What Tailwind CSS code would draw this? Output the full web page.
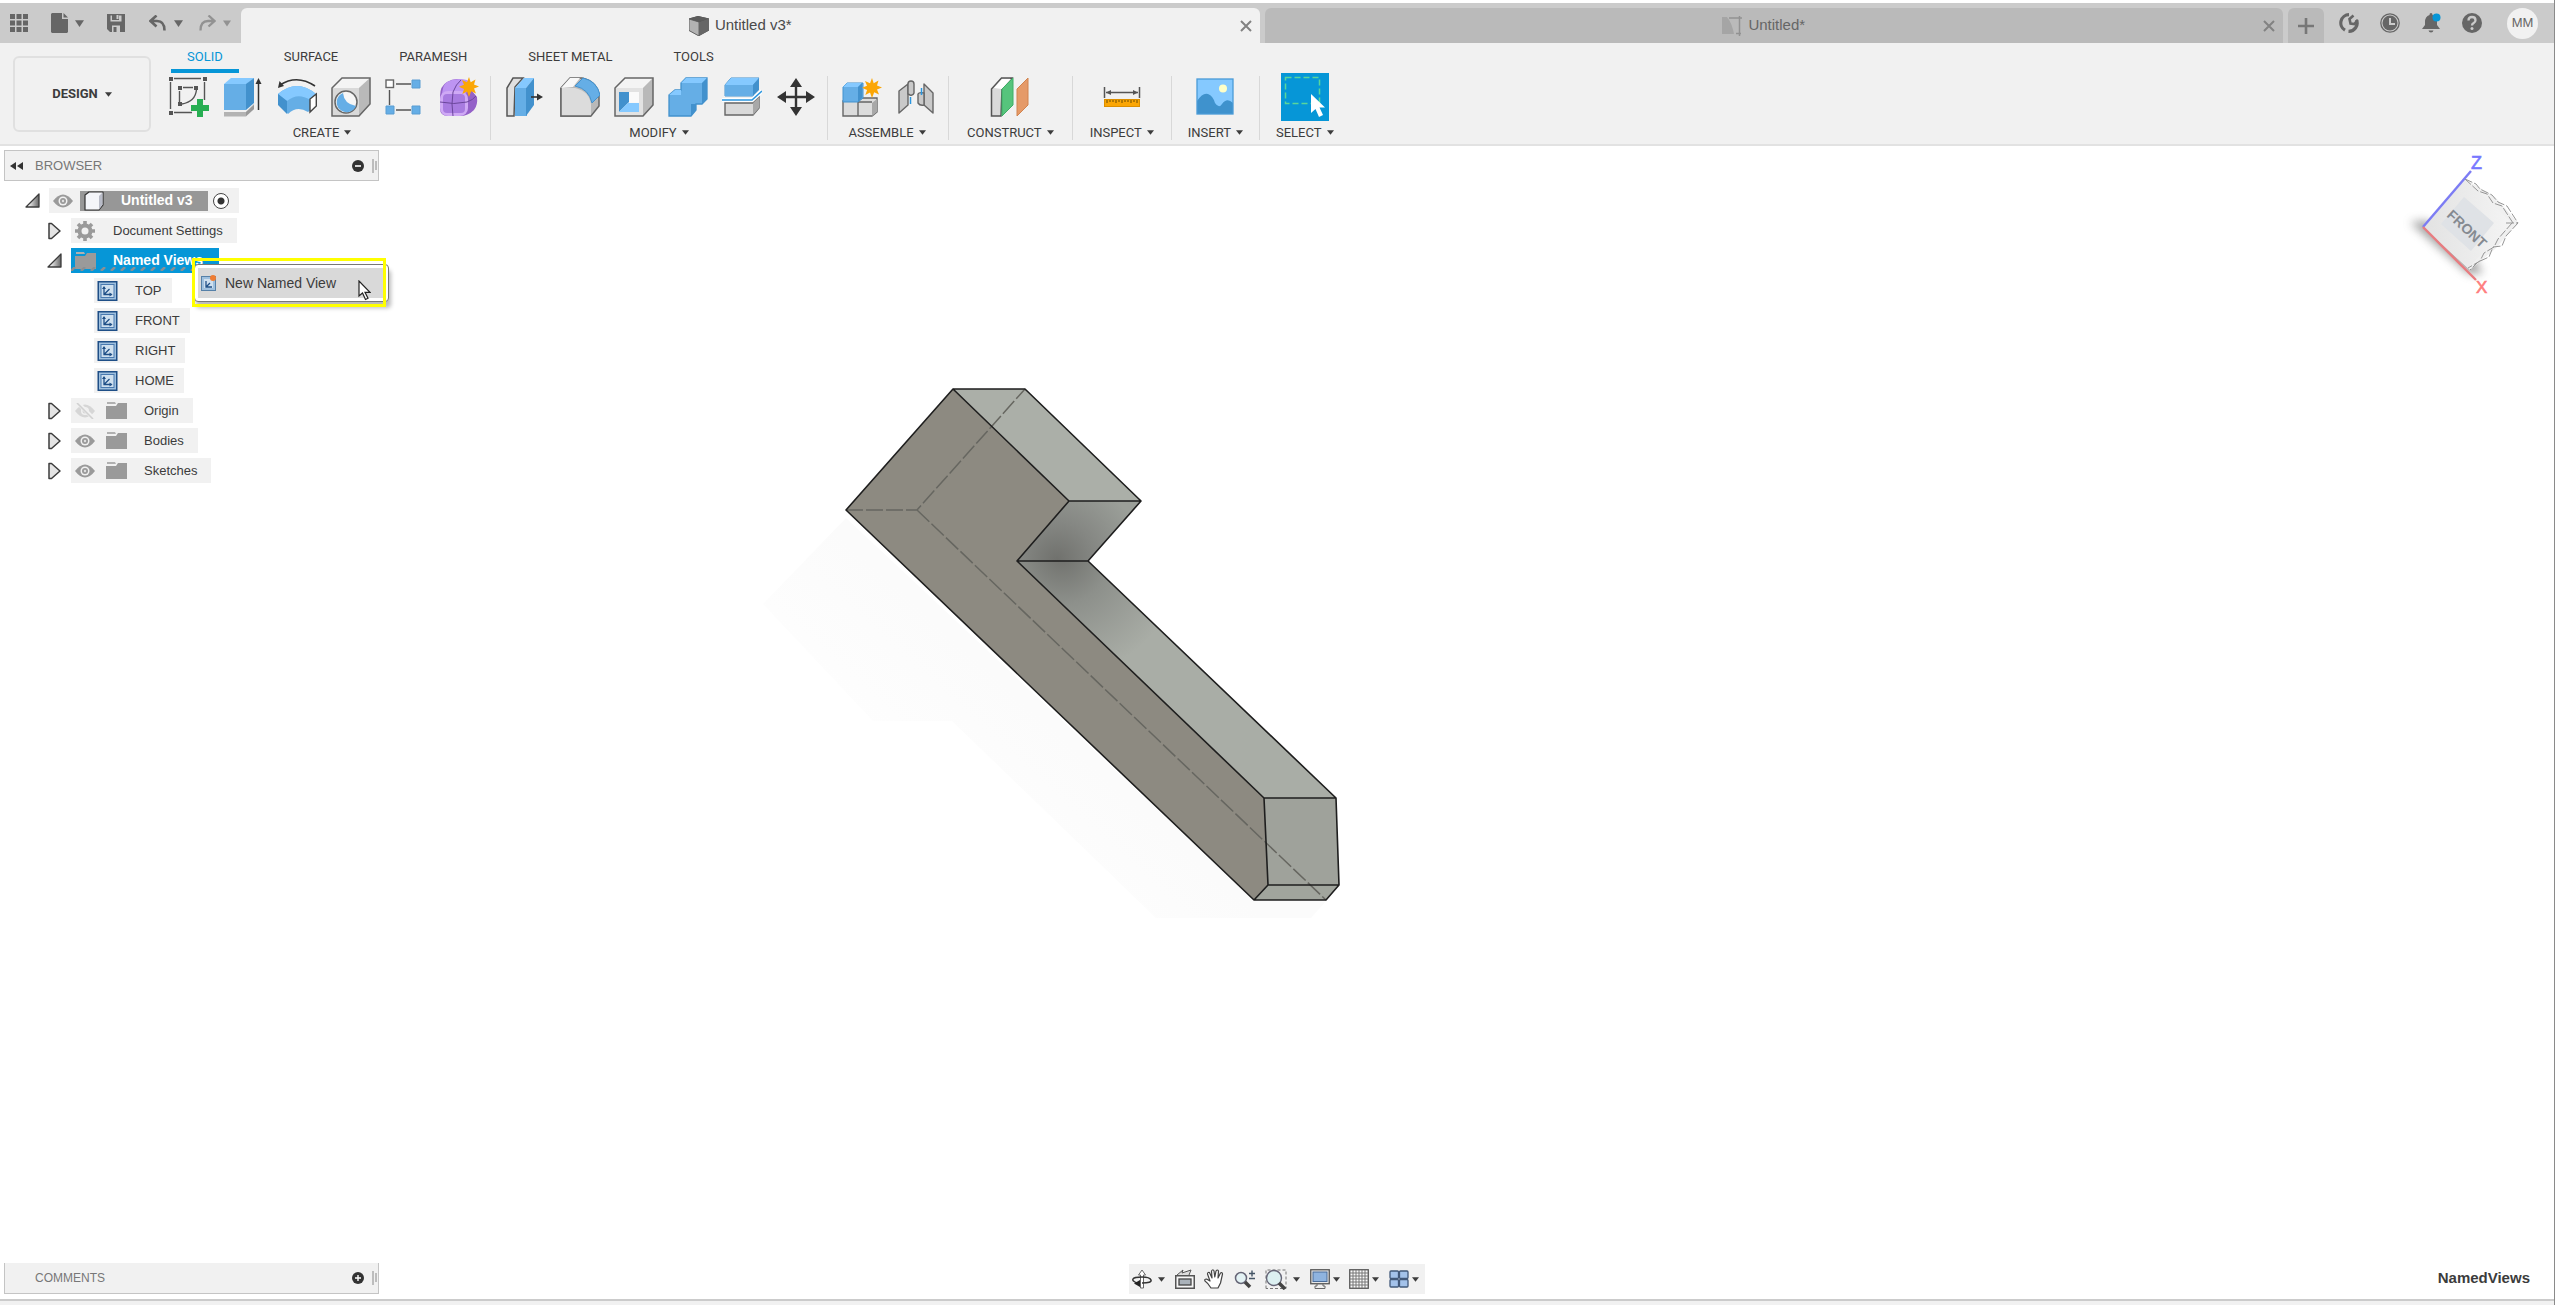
<!DOCTYPE html>
<html lang="en">
<head>
    <meta charset="UTF-8">
    <meta name="viewport" content="width=device-width, initial-scale=1.0">
    <title>Untitled v3*</title>
    <script src="https://cdn.jsdelivr.net/npm/@tailwindcss/browser@4"></script>
</head>
<body class="h-screen flex flex-col overflow-hidden bg-white border-r border-[#8a8a8a] font-['Liberation_Sans',Arial,sans-serif] text-[13px] text-[#3c3c3c]">
    <!-- Shared symbols -->
    <svg class="absolute w-0 h-0">
        <symbol id="caret" viewBox="0 0 8 5"><path d="M0 0h8L4 5z" fill="currentColor"/></symbol>
        <symbol id="close" viewBox="0 0 12 12"><path d="M1 1l10 10M11 1L1 11" stroke="currentColor" stroke-width="2" fill="none"/></symbol>
        <symbol id="eye" viewBox="0 0 20 14"><path d="M0 7Q5 0.500 10 0.500T20 7Q15 13.500 10 13.500T0 7z" fill="#9a9a9a"/><circle cx="10" cy="7" r="4.500" fill="#f1f1f1"/><circle cx="10" cy="7" r="3" fill="#9a9a9a"/><circle cx="10" cy="7" r="1.200" fill="#e0e0e0"/></symbol>
        <symbol id="folder" viewBox="0 0 21 17"><path d="M1 0h8l1 2H1z" fill="#b0b0b0"/><path d="M0 4h10l2-3h9v16H0z" fill="#9a9a9a"/></symbol>
        <symbol id="closed" viewBox="0 0 13 18"><path d="M1 1.500h2.500L12 9l-8.500 7.500H1z" fill="#e4e4e4" stroke="#3c3c3c" stroke-width="1.500" stroke-linejoin="round"/></symbol>
        <linearGradient id="openFill" x1="0" y1="0" x2="1" y2="0"><stop offset="0.200" stop-color="#f4f4f4"/><stop offset="1" stop-color="#666"/></linearGradient>
        <symbol id="open" viewBox="0 0 15 15"><path d="M14 1v13H1z" fill="url(#openFill)" stroke="#3c3c3c" stroke-width="1.300" stroke-linejoin="round"/></symbol>
        <symbol id="view" viewBox="0 0 20 20"><rect x="0.750" y="0.750" width="18.500" height="18.500" fill="#9fc0de" stroke="#1f4f87" stroke-width="1.500"/><rect x="3.500" y="3.500" width="13" height="13" fill="#cfe0ef" stroke="#4a7ab0"/><path d="M6.500 6v7.500H14M6.500 13.500L12 8" fill="none" stroke="#1f4f87" stroke-width="1.300"/><path d="M4.500 8l2-3 2 3zM12 11.500l3 2-3 2z" fill="#1f4f87"/></symbol>
        <symbol id="star" viewBox="0 0 20 20"><path d="M10 0l1.700 5.200L16.500 2.500 15 7.500 20 9.500l-5 2 2 5-4.800-2.200L10 20l-2-5.500L3.300 17l1.800-5L0 9.800 5 7.800 3 3l5 2.300z" fill="#fba605"/></symbol>
    </svg>

    <!-- Title bar -->
    <header class="mt-[3px] h-10 flex items-stretch bg-[#cbcbcb] text-[#666]">
        <div class="w-[241px] flex items-center pl-[10px]">
            <button aria-label="Data panel"><svg class="w-[18px] h-[18px]" viewBox="0 0 18 18" fill="#666"><path d="M0 0h5v5H0zM6.500 0h5v5h-5zM13 0h5v5h-5zM0 6.500h5v5H0zM6.500 6.500h5v5h-5zM13 6.500h5v5h-5zM0 13h5v5H0zM6.500 13h5v5h-5zM13 13h5v5h-5z"/></svg></button>
            <button aria-label="File" class="ml-[23px] flex items-center gap-[7px]"><svg class="w-[17px] h-5" viewBox="0 0 17 20" fill="#666"><path d="M1 0h10v6h6v13l-1 1H1l-1-1V1z"/><path d="M12.500 0v4.500H17z"/></svg><svg class="w-[9px] h-[7px]" viewBox="0 0 8 6"><path d="M0 0h8L4 6z" fill="#666"/></svg></button>
            <button aria-label="Save" class="ml-[23px]"><svg class="w-[18px] h-[18px]" viewBox="0 0 18 18"><path d="M0 0h18v18H3l-3-3z" fill="#666"/><path d="M3.500 1.500h11v6h-11zM5 11.500h8V18H5z" fill="#cbcbcb"/><path d="M5 0h7v6H5zM6.500 13h3v5h-3z" fill="#666"/><path d="M9.500 1h2v4h-2z" fill="#cbcbcb"/></svg></button>
            <button aria-label="Undo" class="ml-6 flex items-center gap-2"><svg class="w-[17px] h-4" viewBox="0 0 17 16" fill="none" stroke="#666" stroke-width="2.600"><path d="M7.500 0.500L1.500 6l6 5.500M1.500 6H8q7.500 0 7.500 9.500"/></svg><svg class="w-[9px] h-[7px]" viewBox="0 0 8 6"><path d="M0 0h8L4 6z" fill="#666"/></svg></button>
            <button aria-label="Redo" class="ml-4 flex items-center gap-[7px]"><svg class="w-[17px] h-4" viewBox="0 0 17 16" fill="none" stroke="#929292" stroke-width="2.300"><path d="M9.500 0.500l6 5.500-6 5.500M15.500 6H9Q1.500 6 1.500 15.500"/></svg><svg class="w-2 h-[7px]" viewBox="0 0 8 6"><path d="M0 0h8L4 6z" fill="#929292"/></svg></button>
        </div>
        <div class="flex-1 mt-[5px] flex items-center bg-[#f1f1f1] rounded-t-md pr-2 text-[15px] text-[#4a4a4a]">
            <div class="flex-1 flex items-center justify-center gap-[6px]">
                <svg class="w-5 h-5" viewBox="0 0 20 20"><path d="M0 2.500L9 0l11 2.500v12L10 20 0 14.500z" fill="#4a4a4a"/><path d="M0 3l10 3v14L0 14.500z" fill="#b3b3b3" stroke="#666"/><path d="M0 2.500L9 0l11 2.500L10 6z" fill="#5c5c5c"/><path d="M10 6l10-3.500v12L10 20z" fill="#666"/></svg>
                <span>Untitled v3*</span>
            </div>
            <button aria-label="Close tab" class="text-[#828282]"><svg class="w-3 h-3"><use href="#close"/></svg></button>
        </div>
        <div class="flex-1 ml-[5px] mt-[5px] flex items-center bg-[#bababa] rounded-t-md pr-2 text-[15px] text-[#666]">
            <div class="flex-1 flex items-center justify-center gap-[6px]">
                <svg class="w-5 h-5" viewBox="0 0 20 20"><path d="M0 1h5q5 6 7 17H0z" fill="#a5a5a5"/><path d="M7 2h13M17.500 0v20M14 17.500h5" stroke="#929292" stroke-width="1.500" fill="none"/></svg>
                <span>Untitled*</span>
            </div>
            <button aria-label="Close tab" class="text-[#828282]"><svg class="w-3 h-3"><use href="#close"/></svg></button>
        </div>
        <button aria-label="New tab" class="ml-[5px] mt-[5px] w-9 flex items-center justify-center bg-[#bababa] rounded-t-md"><svg class="w-4 h-4" viewBox="0 0 16 16"><path d="M8 0v16M0 8h16" stroke="#777" stroke-width="2.600"/></svg></button>
        <div class="w-[230px] flex items-center gap-[21px] pl-[15px]">
            <button aria-label="Extensions"><svg class="w-5 h-5" viewBox="0 0 20 20" fill="none" stroke="#666"><path d="M10 1.700A8.300 8.300 0 0 0 6 17.200" stroke-width="3.200"/><path d="M9.500 18.300a8.300 8.300 0 0 0 8-11.500" stroke-width="3.200"/><path d="M14.500 2.500l-4 3.500 1 4.500 4 .5 3-4" stroke-width="2.600"/></svg></button>
            <button aria-label="Job status"><svg class="w-5 h-5" viewBox="0 0 20 20" fill="none"><circle cx="10" cy="10" r="9.200" stroke="#666" stroke-width="1.300"/><circle cx="10" cy="10" r="7.500" fill="#666"/><path d="M10 5v6h5" stroke="#cbcbcb" stroke-width="2"/></svg></button>
            <button aria-label="Notifications"><svg class="w-5 h-5" viewBox="0 0 20 20"><path d="M10 0q1.500 0 1.500 2 4.500 1.500 4.500 7v3l3 4H1l3-4V9q0-5.500 4.500-7 0-2 1.500-2zM7.500 17.500h5q-.5 2-2.500 2t-2.500-2z" fill="#666"/><circle cx="15.500" cy="4.500" r="4" fill="#0696d7"/></svg></button>
            <button aria-label="Help"><svg class="w-5 h-5" viewBox="0 0 20 20" fill="none"><circle cx="10" cy="10" r="10" fill="#666"/><path d="M6.500 7.500Q6.500 4 10 4t3.500 3.300Q13.500 9 11.700 10T10 12.500" stroke="#cbcbcb" stroke-width="2.300"/><circle cx="10" cy="15.500" r="1.500" fill="#cbcbcb"/></svg></button>
            <button class="ml-1 w-[31px] h-[31px] rounded-full bg-[#f1f1f1] text-[13px]">MM</button>
        </div>
    </header>

    <!-- Ribbon -->
    <section class="h-[103px] flex bg-[#f1f1f1] border-b-2 border-[#e2e2e2] font-[Roboto,sans-serif]">
        <button class="mt-[13px] ml-[13px] w-[138px] h-[76px] flex items-center justify-center gap-[7px] border-2 border-[#e0e0e0] rounded-md font-bold">DESIGN <svg class="w-[7px] h-[5px]"><use href="#caret"/></svg></button>
        <div class="ml-[3px] flex flex-col">
            <nav class="flex gap-[29px] pl-[17px] h-[30px]">
                <a href="#" class="px-4 pt-1 text-[#0696d7] border-b-4 border-[#0696d7]">SOLID</a>
                <a href="#" class="px-4 pt-1">SURFACE</a>
                <a href="#" class="px-4 pt-1">PARAMESH</a>
                <a href="#" class="px-4 pt-1">SHEET METAL</a>
                <a href="#" class="px-4 pt-1">TOOLS</a>
            </nav>
            <div class="flex h-[70px]">
                <!-- Create -->
                <div class="pl-[15px] pr-[11px] flex flex-col items-center gap-[2px]">
                    <div class="h-12 flex items-center gap-[14px]">
                        <button aria-label="Create sketch"><svg class="w-10 h-10" viewBox="0 0 40 40"><path d="M5 1.500h27M1.500 5v27M35.500 5v18M5 35.500h18M10.500 14v11M14 10.500h10M27.500 12.500q-1 12-14.500 14.500" fill="none" stroke="#555" stroke-width="1.400"/><path d="M0 0h4v4H0zM34 0h4v4h-4zM0 34h4v4H0zM9 9h4v4H9zM25 9h4v4h-4zM9 25h4v4H9z" fill="#555"/><path d="M28 22h6v6h6v6h-6v6h-6v-6h-6v-6h6z" fill="#27ae52"/></svg></button>
                        <button aria-label="Extrude"><svg class="w-10 h-10" viewBox="0 0 40 40"><path d="M1 35h22l8-8v5l-8 7.500H1z" fill="#b3b3b3"/><path d="M23 35l8-7v4l-8 7z" fill="#999"/><path d="M1 7h22v26H1z" fill="#65aee6"/><path d="M1 7l7-6h23l-7 6z" fill="#85c9ff"/><path d="M23 7l8-6v25l-8 7z" fill="#4291cd"/><path d="M35.500 33V4" stroke="#333" stroke-width="1.500"/><path d="M32.500 7l3-6 3 6z" fill="#333"/></svg></button>
                        <button aria-label="Revolve"><svg class="w-10 h-10" viewBox="0 0 40 40"><path d="M3 8Q20-3 38 9" fill="none" stroke="#333" stroke-width="1.600"/><path d="M1 11l1.500-7L7 9z" fill="#333"/><path d="M1 17Q20 1 39 17v12l-8 6Q20 28 11 37L1 27z" fill="#65aee6"/><path d="M1 17Q20 1 39 17l-6 6Q21 15 10 24z" fill="#85c9ff"/><path d="M1 17l9 7v13L1 28z" fill="#4291cd"/><path d="M39.300 17v12l-6.300 6V22z" fill="#fff" stroke="#444" stroke-width="1.400"/></svg></button>
                        <button aria-label="Hole"><svg class="w-10 h-10" viewBox="0 0 40 40"><path d="M1 11L11 1h28v26L28 39H1z" fill="#d9d9d9"/><path d="M1 11L11 1h28L28 11z" fill="#f4f4f4"/><path d="M28 11L39 1v26L28 39z" fill="#b9b9b9"/><path d="M1 11L11 1h28v26L28 39H1z" fill="none" stroke="#666" stroke-width="1.500"/><circle cx="15" cy="25" r="11" fill="#f6f6f6" stroke="#666" stroke-width="1.500"/><path d="M12 16q1 11 13 13A10 10 0 1 1 12 16z" fill="#65aee6"/></svg></button>
                        <button aria-label="Pattern"><svg class="w-10 h-10" viewBox="0 0 40 40"><path d="M11 7h15M4.500 13v15M11 33h15" stroke="#555" stroke-width="1.400"/><rect x="1" y="3" width="7.500" height="7.500" fill="#fff" stroke="#666" stroke-width="1.400"/><g fill="#65aee6" stroke="#5a9dd2"><path d="M27 3h8v8h-8zM1 29h8v8H1zM27 29h8v8h-8z"/></g></svg></button>
                        <button aria-label="Create form"><svg class="w-10 h-10" viewBox="0 0 40 40"><path d="M8 5Q16 0 24 3l14 17q1 8-3 13-6 6-14 6H9q-8 0-8-8V19Q1 9 8 5z" fill="#9461c8"/><path d="M8 5q9-5 20-2l5 5-6 8H10q-8 0-7 4 0-12 5-15z" fill="#bd94f2"/><rect x="1" y="14" width="28" height="25" rx="8" fill="#cfa9f5"/><rect x="4" y="17" width="22" height="19" rx="4" fill="#a87be0"/><path d="M14 15q-2 12 0 24M1 25q14 3 27 0 6-2 9-6M14 15q3-8 8-12" stroke="#6b469b" fill="none"/><use href="#star" x="20" y="0" width="20" height="20"/></svg></button>
                    </div>
                    <button class="mr-1 flex items-center gap-[5px]">CREATE <svg class="w-[7px] h-[5px]"><use href="#caret"/></svg></button>
                </div>
                <div class="mt-[3px] h-16 w-px bg-[#d8d8d8]"></div>
                <!-- Modify -->
                <div class="pl-[15px] pr-[11px] flex flex-col items-center gap-[2px]">
                    <div class="h-12 flex items-center gap-[14px]">
                        <button aria-label="Press pull"><svg class="w-10 h-10" viewBox="0 0 40 40"><path d="M8 39H1V11L7 1h10L9 10z" fill="#e0e0e0" stroke="#555" stroke-width="1.500"/><path d="M9 11h12v28H9z" fill="#65aee6"/><path d="M9 11l9-10h10l-8 10z" fill="#85c9ff"/><path d="M20 11l8-10v27l-8 11z" fill="#4291cd"/><path d="M25 20h9" stroke="#333" stroke-width="1.600"/><path d="M31 16.500l6 3.500-6 3.500z" fill="#333"/></svg></button>
                        <button aria-label="Fillet"><svg class="w-10 h-10" viewBox="0 0 40 40"><path d="M1 11L10 1h12q14 3 17 16v12L31 39H1z" fill="#b9b9b9" stroke="#666" stroke-width="1.500"/><path d="M1 11L10 1h10l-7 9z" fill="#f8f8f8"/><path d="M1 11h14q14 3 16 16v12H1z" fill="#dcdcdc"/><path d="M1 11v28h30" fill="none" stroke="#666" stroke-width="1.500"/><path d="M15 9l8-8q14 3 17 17l-8 8Q29 12 15 9z" fill="#65aee6" stroke="#4291cd"/></svg></button>
                        <button aria-label="Shell"><svg class="w-10 h-10" viewBox="0 0 40 40"><path d="M1 11L11 1h28v27L29 39H1z" fill="#e2e2e2"/><path d="M1 11L11 1h28L29 11z" fill="#f4f4f4"/><path d="M29 11L39 1v27L29 39z" fill="#b9b9b9"/><path d="M1 11L11 1h28v27L29 39H1z" fill="none" stroke="#666" stroke-width="1.500"/><path d="M5 15h20v20H5z" fill="#f8f8f8"/><path d="M5 15h10v10L5 35z" fill="#4291cd"/><path d="M5 35l9-9h11v9z" fill="#85c9ff"/><path d="M15 15h10v10H15z" fill="#fafafa"/></svg></button>
                        <button aria-label="Combine"><svg class="w-10 h-10" viewBox="0 0 40 40"><path d="M1 18l6-5h6V6l5-5h21v21l-5 5h-6v6l-5 6H1z" fill="#65aee6" stroke="#4291cd" stroke-width="1.300"/><path d="M13 6l5-5h21l-5 5zM1 18l6-5h6v5z" fill="#85c9ff"/><path d="M34 6l5-5v21l-5 5zM23 27h5v6l-5 6z" fill="#4291cd"/></svg></button>
                        <button aria-label="Split body"><svg class="w-10 h-10" viewBox="0 0 40 40"><path d="M3 8l6-7h28l-6 7v11H3z" fill="#65aee6" stroke="#4291cd"/><path d="M3 8l6-7h28l-6 7z" fill="#85c9ff"/><path d="M3 8h28v11H3z" fill="#65aee6"/><path d="M31 8l6-7v12l-6 6z" fill="#4291cd"/><path d="M3 26h28l6-6v11l-6 7H3z" fill="#d9d9d9" stroke="#666" stroke-width="1.400"/><path d="M31 26l6-6v11l-6 7z" fill="#a8a8a8"/><path d="M0 23h30L40 14" fill="none" stroke="#fff" stroke-width="4"/><path d="M0 23h30L40 14" fill="none" stroke="#2b96e0" stroke-width="1.600"/></svg></button>
                        <button aria-label="Move"><svg class="w-10 h-10" viewBox="0 0 40 40"><path d="M20 6v28M6 20h28" stroke="#333" stroke-width="2.400"/><path d="M14 10l6-9 6 9zM14 30l6 9 6-9zM10 14l-9 6 9 6zM30 14l9 6-9 6z" fill="#333"/></svg></button>
                    </div>
                    <button class="mr-1 flex items-center gap-[5px]">MODIFY <svg class="w-[7px] h-[5px]"><use href="#caret"/></svg></button>
                </div>
                <div class="mt-[3px] h-16 w-px bg-[#d8d8d8]"></div>
                <!-- Assemble -->
                <div class="pl-[14px] pr-3 flex flex-col items-center gap-[2px]">
                    <div class="h-12 flex items-center gap-[14px]">
                        <button aria-label="New component"><svg class="w-10 h-10" viewBox="0 0 40 40"><path d="M1 24h14l5-3h15v14l-5 4H1z" fill="#dcdcdc" stroke="#666" stroke-width="1.400"/><path d="M30 26l5-4v13l-5 4z" fill="#a8a8a8"/><path d="M16 25v14M16 25h14" stroke="#666" stroke-width="1.400"/><path d="M1 10l4-4h16v15l-5 4H1z" fill="#65aee6" stroke="#4291cd"/><path d="M1 10l4-4h15l-4 4z" fill="#85c9ff"/><path d="M16 10l4-4v15l-4 4z" fill="#4291cd"/><use href="#star" x="20" y="1" width="20" height="20"/></svg></button>
                        <button aria-label="Joint"><svg class="w-10 h-10" viewBox="0 0 40 40"><g fill="#c9c9c9" stroke="#666" stroke-width="1.400" stroke-linejoin="round"><path d="M3 14l9-7v21l-9 8z"/><path d="M12 7q0-3 3-3t3 3v9q-1 3-4 2l-2-1z"/><path d="M37 16l-9-9v21l9 8z"/><path d="M28 16q-5-1-6 1v9q2 3 6 2z"/></g><path d="M14.500 20v7M25.500 11v7" stroke="#2b96e0" stroke-width="1.500"/></svg></button>
                    </div>
                    <button class="mr-1 flex items-center gap-[5px]">ASSEMBLE <svg class="w-[7px] h-[5px]"><use href="#caret"/></svg></button>
                </div>
                <div class="mt-[3px] h-16 w-px bg-[#d8d8d8]"></div>
                <!-- Construct -->
                <div class="px-[18px] flex flex-col items-center gap-[2px]">
                    <div class="h-12 flex items-center">
                        <button aria-label="Offset plane"><svg class="w-10 h-10" viewBox="0 0 40 40"><path d="M11 39H1.500V12l10-11H22L12 12z" fill="#dadada" stroke="#555" stroke-width="1.500"/><path d="M4 11l8-9h9l-9 10z" fill="#fff"/><path d="M12 12L23 1v27L12 39z" fill="#56c47c" stroke="#3eae66"/><path d="M27 12L38 1v27L27 39z" fill="#e59a68" stroke="#d1834e"/></svg></button>
                    </div>
                    <button class="flex items-center gap-[5px]">CONSTRUCT <svg class="w-[7px] h-[5px]"><use href="#caret"/></svg></button>
                </div>
                <div class="mt-[3px] h-16 w-px bg-[#d8d8d8]"></div>
                <!-- Inspect -->
                <div class="px-[17px] flex flex-col items-center gap-[2px]">
                    <div class="h-12 flex items-center">
                        <button aria-label="Measure"><svg class="w-10 h-10" viewBox="0 0 40 40"><path d="M2.500 10v11M37.500 10v11M4 15.500h32" stroke="#555" stroke-width="1.500"/><path d="M4 15.500l5-2.500v5zM36 15.500L31 13v5z" fill="#555"/><rect x="2.500" y="22.500" width="35" height="7" fill="#fba605" stroke="#dc8f00"/><path d="M5 23v3M8 23v2M11 23v2M14 23v3M17 23v2M20 23v3M23 23v2M26 23v2M29 23v3M32 23v2M35 23v3" stroke="#6b4a00"/></svg></button>
                    </div>
                    <button class="flex items-center gap-[5px]">INSPECT <svg class="w-[7px] h-[5px]"><use href="#caret"/></svg></button>
                </div>
                <div class="mt-[3px] h-16 w-px bg-[#d8d8d8]"></div>
                <!-- Insert -->
                <div class="px-4 flex flex-col items-center gap-[2px]">
                    <div class="h-12 flex items-center">
                        <button aria-label="Insert canvas"><svg class="w-10 h-10" viewBox="0 0 40 40"><rect x="2" y="2" width="36" height="35" fill="#85c9ff"/><path d="M2 24Q8 15 13 17t7 9q4 6 7 1 5-7 11-1v11H2z" fill="#3f92cd"/><circle cx="28" cy="11.500" r="4" fill="#ffffc8"/><rect x="2" y="2" width="36" height="35" fill="none" stroke="#4a9bd8" stroke-width="1.300"/></svg></button>
                    </div>
                    <button class="flex items-center gap-[5px]">INSERT <svg class="w-[7px] h-[5px]"><use href="#caret"/></svg></button>
                </div>
                <div class="mt-[3px] h-16 w-px bg-[#d8d8d8]"></div>
                <!-- Select -->
                <div class="px-4 flex flex-col items-center gap-[2px]">
                    <div class="h-12 flex items-center">
                        <button aria-label="Select" class="bg-[#0696d7]"><svg class="w-12 h-12" viewBox="0 0 48 48"><rect x="4.500" y="4.500" width="34" height="26" fill="none" stroke="#5ad69a" stroke-width="1.500" stroke-dasharray="6 3"/><path d="M30 21v19l4.500-4 3.500 8 4-2-3.500-7.500H44z" fill="#fff"/></svg></button>
                    </div>
                    <button class="flex items-center gap-[5px]">SELECT <svg class="w-[7px] h-[5px]"><use href="#caret"/></svg></button>
                </div>
            </div>
        </div>
    </section>

    <!-- Workspace -->
    <main class="relative flex-1 flex flex-col justify-between">
        <!-- Model -->
        <svg class="absolute inset-0 w-full h-full" viewBox="0 146 2554 1153">
            <defs>
                <radialGradient id="shadeA" gradientUnits="userSpaceOnUse" cx="1057" cy="560" r="85"><stop offset="0" stop-color="#70716d"/><stop offset="0.450" stop-color="#858783"/><stop offset="1" stop-color="#9b9f99"/></radialGradient>
                <radialGradient id="shadeB" gradientUnits="userSpaceOnUse" cx="1062" cy="556" r="120"><stop offset="0" stop-color="#70716d"/><stop offset="0.400" stop-color="#8d908b"/><stop offset="1" stop-color="#a9ada6"/></radialGradient>
                <linearGradient id="ground" gradientUnits="userSpaceOnUse" x1="1000" y1="680" x2="900" y2="790"><stop offset="0" stop-color="#fbfbfb"/><stop offset="1" stop-color="#fefefe"/></linearGradient>
            </defs>
            <path d="M846 518L763 604L873 721H952L1156 918H1311L1327 900H1254z" fill="url(#ground)"/>
            <path d="M846 510L953 389L1069 501L1017 561L1264 798L1268 885L1254 900z" fill="#8d8a81"/>
            <path d="M953 389h72L1141 501H1069z" fill="#abafa8"/>
            <path d="M1069 501h72L1088 561H1017z" fill="url(#shadeA)"/>
            <path d="M1017 561h71L1336 798H1264z" fill="url(#shadeB)"/>
            <path d="M1264 798h72L1339 885H1268z" fill="#9fa29b"/>
            <path d="M1268 885h71L1326 900H1254z" fill="#a1a59d"/>
            <path d="M846 510H917L1025 389M917 510L1326 900" fill="none" stroke="#666660" stroke-width="1.500" stroke-dasharray="17 3"/>
            <path d="M846 510L953 389L1069 501L1017 561L1264 798L1268 885L1254 900zM953 389H1025L1141 501H1069M1141 501L1088 561H1017M1088 561L1336 798H1264M1336 798L1339 885H1268M1339 885L1326 900H1254" fill="none" stroke="#1e1e1e" stroke-width="1.600" stroke-linejoin="round"/>
        </svg>

        <!-- View cube -->
        <svg class="absolute top-0 right-0 w-[174px] h-40" viewBox="0 0 174 160">
            <defs>
                <linearGradient id="cubeFill" x1="0" y1="0" x2="1" y2="0"><stop offset="0" stop-color="#e2e2e2"/><stop offset="1" stop-color="#f4f4f4"/></linearGradient>
                <filter id="soft" x="-50%" y="-50%" width="200%" height="200%"><feGaussianBlur stdDeviation="5"/></filter>
            </defs>
            <path d="M30 76l59 52 14-1-12-18-44-34z" fill="#777" opacity="0.700" filter="url(#soft)"/>
            <path d="M43 81L85 33L115 51L138 77L115 103L90 124z" fill="#f0f0f0"/>
            <path d="M43 81L85 33L132 77L88 122z" fill="url(#cubeFill)"/>
            <path d="M61 78L84 51L114 77L91 105z" fill="#dfe2e6"/>
            <path d="M85 33l11 5 4 5 12 6 6 7 9 4 11 17M85 33l13 12 9 3 6 9 9 3 11 17M138 77l-12 13-4 10-9 1-4 10-11 5-8 8M132 77l-14 16-4 8-10 6-4 8-12 7M126 77h12" fill="none" stroke="#969696" stroke-dasharray="8 2"/>
            <path d="M43 81L91 25" stroke="#7c7cf4" stroke-width="2.400"/>
            <path d="M43 81L96 134" stroke="#e87c80" stroke-width="2.400"/>
            <text x="66" y="70" transform="rotate(43 66 70)" class="font-bold text-[14px]" fill="#858a91">FRONT</text>
            <text x="91" y="23" class="text-[18px]" fill="#7777ff" stroke="#7777ff" stroke-width="0.600">Z</text>
            <text x="96" y="147" class="text-[17px]" fill="#ff7c7c" stroke="#ff7c7c" stroke-width="0.600">X</text>
        </svg>

        <!-- Browser -->
        <aside class="relative ml-1 pt-1 w-[375px]">
            <div class="h-[31px] flex items-center bg-[#f1f1f1] border border-[#c4c4c4] pl-[5px] pr-px text-[#777]">
                <button aria-label="Collapse browser"><svg class="w-[13px] h-2" viewBox="0 0 13 8"><path d="M6 0v8L0 4zM13 0v8L7 4z" fill="#333"/></svg></button>
                <span class="flex-1 ml-3">BROWSER</span>
                <button aria-label="Display settings"><svg class="w-3 h-3" viewBox="0 0 12 12"><circle cx="6" cy="6" r="6" fill="#333"/><path d="M3 6h6" stroke="#fff" stroke-width="1.600"/></svg></button>
                <svg class="ml-2 w-[5px] h-[14px]" viewBox="0 0 5 14"><path d="M1 0v14M4 2v9" stroke="#888"/></svg>
            </div>
            <ul class="mt-[7px] flex flex-col gap-[5px]">
                <li class="flex items-center pl-[21px]">
                    <svg class="w-[15px] h-[15px]"><use href="#open"/></svg>
                    <div class="ml-[9px] h-[25px] flex items-center bg-[#f1f1f1] pl-1 pr-[10px]">
                        <svg class="w-5 h-[14px]"><use href="#eye"/></svg>
                        <div class="ml-[7px] h-5 w-32 flex items-center bg-[#979797] pl-1 text-white font-bold text-[14px]">
                            <svg class="w-5 h-5" viewBox="0 0 20 20"><path d="M1 4l4-3h14v13l-4 5H1z" fill="#f4f5f9" stroke="#333" stroke-width="1.200" stroke-linejoin="round"/><path d="M15 5l3.500-3.500v12L15 18.500z" fill="#b9bcc8"/></svg>
                            <span class="ml-[17px]">Untitled v3</span>
                        </div>
                        <input type="radio" checked aria-label="Activate component" class="ml-[5px] appearance-none w-4 h-4 rounded-full border border-[#444] bg-[radial-gradient(circle,#333_3px,#fff_4px)]">
                    </div>
                </li>
                <li class="flex items-center pl-11">
                    <svg class="w-[13px] h-[18px]"><use href="#closed"/></svg>
                    <div class="ml-[10px] h-[25px] flex items-center bg-[#f1f1f1] pl-1 pr-[14px]">
                        <svg class="w-5 h-5" viewBox="0 0 20 20"><circle cx="10" cy="10" r="5.500" fill="none" stroke="#9a9a9a" stroke-width="4"/><path d="M10 0v20M0 10h20M3 3l14 14M17 3L3 17" stroke="#9a9a9a" stroke-width="3.600"/><circle cx="10" cy="10" r="3.500" fill="#f1f1f1"/></svg>
                        <span class="ml-[18px]">Document Settings</span>
                    </div>
                </li>
                <li class="flex items-center pl-[43px]">
                    <svg class="w-[15px] h-[15px]"><use href="#open"/></svg>
                    <div class="relative ml-[9px] h-[25px] w-[148px] flex items-center bg-[#0696d7] pl-1 text-white font-bold text-[14px]">
                        <svg class="w-[21px] h-[17px]"><use href="#folder"/></svg>
                        <span class="ml-[17px]">Named Views</span>
                        <svg class="absolute left-0 bottom-[2px] w-full h-1" viewBox="0 0 148 4"><path d="M0 4l4-4M10 4l4-4M20 4l4-4M30 4l4-4M40 4l4-4M50 4l4-4M60 4l4-4M70 4l4-4M80 4l4-4M90 4l4-4M100 4l4-4M110 4l4-4M120 4l4-4" stroke="#8a8f93" stroke-width="2.500"/></svg>
                    </div>
                </li>
                <li class="flex pl-[90px]"><div class="h-[25px] flex items-center bg-[#f1f1f1] pl-[3px] pr-[10px]"><svg class="w-[21px] h-5"><use href="#view"/></svg><span class="ml-[17px]">TOP</span></div></li>
                <li class="flex pl-[90px]"><div class="h-[25px] flex items-center bg-[#f1f1f1] pl-[3px] pr-[10px]"><svg class="w-[21px] h-5"><use href="#view"/></svg><span class="ml-[17px]">FRONT</span></div></li>
                <li class="flex pl-[90px]"><div class="h-[25px] flex items-center bg-[#f1f1f1] pl-[3px] pr-[10px]"><svg class="w-[21px] h-5"><use href="#view"/></svg><span class="ml-[17px]">RIGHT</span></div></li>
                <li class="flex pl-[90px]"><div class="h-[25px] flex items-center bg-[#f1f1f1] pl-[3px] pr-[10px]"><svg class="w-[21px] h-5"><use href="#view"/></svg><span class="ml-[17px]">HOME</span></div></li>
                <li class="flex items-center pl-11">
                    <svg class="w-[13px] h-[18px]"><use href="#closed"/></svg>
                    <div class="ml-[10px] h-[25px] flex items-center bg-[#f1f1f1] pl-1 pr-[14px]">
                        <svg class="w-5 h-4 opacity-30" viewBox="0 0 20 16"><path d="M0 8Q5 1.500 10 1.500T20 8Q15 14.500 10 14.500T0 8z" fill="#9a9a9a"/><circle cx="10" cy="8" r="4" fill="#f1f1f1"/><circle cx="10" cy="8" r="2.500" fill="#9a9a9a"/><path d="M3 0l15 15" stroke="#f1f1f1" stroke-width="4"/><path d="M2 0l16 16" stroke="#888" stroke-width="1.600"/></svg>
                        <svg class="ml-[11px] w-[21px] h-[17px]"><use href="#folder"/></svg>
                        <span class="ml-[17px]">Origin</span>
                    </div>
                </li>
                <li class="flex items-center pl-11">
                    <svg class="w-[13px] h-[18px]"><use href="#closed"/></svg>
                    <div class="ml-[10px] h-[25px] flex items-center bg-[#f1f1f1] pl-1 pr-[14px]">
                        <svg class="w-5 h-[14px]"><use href="#eye"/></svg>
                        <svg class="ml-[11px] w-[21px] h-[17px]"><use href="#folder"/></svg>
                        <span class="ml-[17px]">Bodies</span>
                    </div>
                </li>
                <li class="flex items-center pl-11">
                    <svg class="w-[13px] h-[18px]"><use href="#closed"/></svg>
                    <div class="ml-[10px] h-[25px] flex items-center bg-[#f1f1f1] pl-1 pr-[14px]">
                        <svg class="w-5 h-[14px]"><use href="#eye"/></svg>
                        <svg class="ml-[11px] w-[21px] h-[17px]"><use href="#folder"/></svg>
                        <span class="ml-[17px]">Sketches</span>
                    </div>
                </li>
            </ul>
        </aside>

        <!-- Context menu -->
        <div class="absolute left-[194px] top-[118px] w-[195px] h-[38px] p-[3px] bg-white border border-[#777] rounded-sm shadow-[2px_6px_4px_#bbb]">
            <button class="w-full h-full flex items-center gap-2 pl-[3px] bg-[#d9d9d9] text-[14px]">
                <svg class="w-4 h-[17px]" viewBox="0 0 16 17"><rect x="0.500" y="1.500" width="14" height="14" fill="#9fc0de" stroke="#5580a8"/><rect x="3" y="4" width="9" height="9" fill="#cfe0ef"/><path d="M5 6v6h6M5 12l4-4" fill="none" stroke="#1f4f87" stroke-width="1.300"/><circle cx="12" cy="3" r="3" fill="#ef7d33"/></svg>
                <span>New Named View</span>
            </button>
        </div>
        <div class="absolute left-[192px] top-[112px] w-[194px] h-[49px] border-3 border-[#ffff00] pointer-events-none"></div>
        <svg class="absolute left-[358px] top-[134px] w-[13px] h-[21px]" viewBox="0 0 13 21"><path d="M1 1v15l3.500-3 3 6.500 2.500-1.200-3-6H12z" fill="#fff" stroke="#222" stroke-width="1.200"/></svg>

        <!-- Bottom row -->
        <div class="relative grid grid-cols-3 items-end pb-[5px]">
            <div class="ml-1 w-[375px] h-[31px] flex items-center bg-[#f1f1f1] border border-t-0 border-[#c4c4c4] pl-[30px] pr-px text-[12px] text-[#777]">
                <span class="flex-1">COMMENTS</span>
                <button aria-label="Add comment"><svg class="w-3 h-3" viewBox="0 0 12 12"><circle cx="6" cy="6" r="6" fill="#333"/><path d="M3 6h6M6 3v6" stroke="#fff" stroke-width="1.400"/></svg></button>
                <svg class="ml-2 w-[5px] h-[14px]" viewBox="0 0 5 14"><path d="M1 0v14M4 2v9" stroke="#888"/></svg>
            </div>
            <div class="justify-self-center w-[296px] h-[30px] flex items-center justify-between bg-[#f1f1f1] pl-[3px] pr-[6px]">
                <button aria-label="Orbit" class="flex items-center gap-[6px]"><svg class="w-5 h-5" viewBox="0 0 20 20" fill="none"><path d="M8.500 19V6H6.500L10 1l3.500 5h-2v13z" fill="#fff" stroke="#666"/><path d="M5 14Q0 12 1 10t9-2 9 3-9 3" stroke="#333" stroke-width="1.500"/><path d="M8 11l-6 3.500L8 18z" fill="#222"/></svg><svg class="w-[7px] h-[5px]"><use href="#caret"/></svg></button>
                <button aria-label="Look at"><svg class="w-5 h-5" viewBox="0 0 20 20"><path d="M2 6l6-5-1 3 9-3-2 5" fill="#ddd" stroke="#555"/><rect x="0.750" y="6.750" width="18.500" height="12.500" fill="#f6f6f6" stroke="#555" stroke-width="1.500"/><rect x="4" y="10" width="12" height="6" fill="#aab2ba" stroke="#444" stroke-width="1.300"/></svg></button>
                <button aria-label="Pan"><svg class="w-5 h-5" viewBox="0 0 20 20"><path d="M7 19Q4 14 1 12q-1-2 1.500-2L6 12 3.500 5q0-2 2-1.500L8 9 7.500 2Q9-.5 10 2l.8 6L12 2q1.500-2 2.500 0L14 9l2.500-5q2-1 2 1L16.500 14 14 19z" fill="#fff" stroke="#444" stroke-width="1.200" stroke-linejoin="round"/></svg></button>
                <button aria-label="Zoom"><svg class="w-[21px] h-5" viewBox="0 0 21 20" fill="none"><circle cx="7" cy="9" r="5.500" fill="#e3f2f4" stroke="#667" stroke-width="1.500"/><path d="M11 13l5 5" stroke="#444" stroke-width="3.500"/><path d="M15 4.500h6M18 1.500v6M15 9.500h6" stroke="#445566" stroke-width="1.400"/></svg></button>
                <button aria-label="Fit" class="flex items-center gap-[6px]"><svg class="w-[22px] h-[21px]" viewBox="0 0 22 21" fill="none"><path d="M1 19.500V1h20v18.500z" stroke="#777" stroke-dasharray="3 2"/><circle cx="9" cy="9" r="7.500" fill="#dcf0f1" stroke="#667" stroke-width="1.400"/><path d="M14 14l6 6" stroke="#444" stroke-width="3.500"/></svg><svg class="w-[7px] h-[5px]"><use href="#caret"/></svg></button>
                <button aria-label="Display settings" class="flex items-center gap-[3px]"><svg class="w-5 h-5" viewBox="0 0 20 20"><rect x="0.750" y="0.750" width="18.500" height="14" fill="#e8e8e8" stroke="#555" stroke-width="1.300"/><rect x="3" y="3" width="14" height="9.500" fill="#8fb4e0" stroke="#4a6c99"/><path d="M7 15h6v2h2v2.500H5V17h2z" fill="#eee" stroke="#666"/></svg><svg class="w-[7px] h-[5px]"><use href="#caret"/></svg></button>
                <button aria-label="Grid and snaps" class="flex items-center gap-[3px]"><svg class="w-5 h-5" viewBox="0 0 20 20"><rect x="0.750" y="0.750" width="18.500" height="18.500" fill="#fafafa" stroke="#555" stroke-width="1.300"/><path d="M4 1v18M7 1v18M10 1v18M13 1v18M16 1v18M1 4h18M1 7h18M1 10h18M1 13h18M1 16h18" stroke="#777"/></svg><svg class="w-[7px] h-[5px]"><use href="#caret"/></svg></button>
                <button aria-label="Viewports" class="flex items-center gap-[3px]"><svg class="w-5 h-[18px]" viewBox="0 0 20 18"><g fill="#a3c2ea" stroke="#42597a" stroke-width="1.300"><rect x="1" y="1" width="8.500" height="7.500" rx="1"/><rect x="10.500" y="1" width="8.500" height="7.500" rx="1"/><rect x="1" y="9.500" width="8.500" height="7.500" rx="1"/><rect x="10.500" y="9.500" width="8.500" height="7.500" rx="1"/></g></svg><svg class="w-[7px] h-[5px]"><use href="#caret"/></svg></button>
            </div>
            <div class="justify-self-end self-center pr-6 font-bold text-[15px]">NamedViews</div>
        </div>
    </main>

    <footer class="h-[6px] bg-[#f1f1f1] border-t-2 border-[#cbcbcb]"></footer>
</body>
</html>
